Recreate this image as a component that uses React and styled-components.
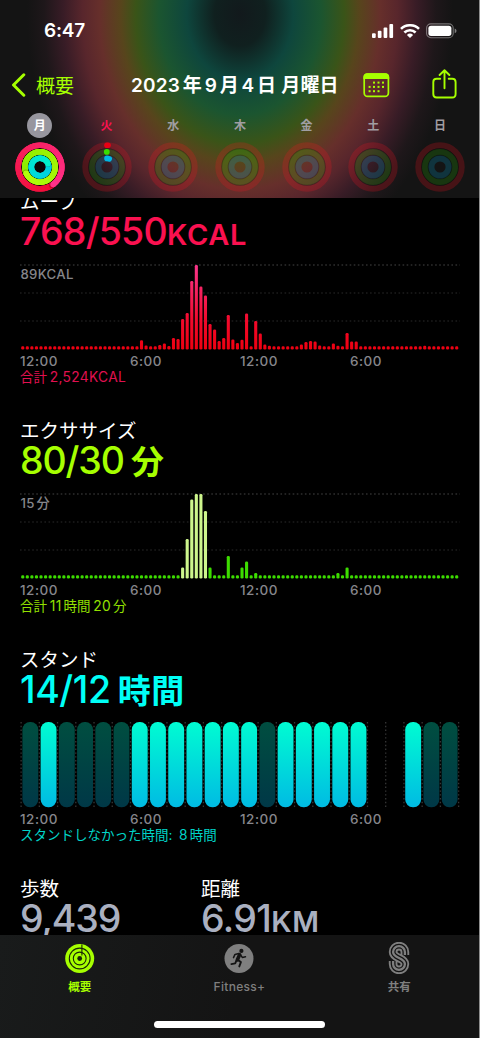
import styled, { createGlobalStyle } from 'styled-components'

const GlobalStyle = createGlobalStyle`
  * {
    box-sizing: border-box;
  }

  body {
    margin: 0;
    background: #8e8e8e;
    font-family: Inter, 'Noto Sans CJK JP', sans-serif;
    overflow: hidden;
  }
`

const Phone = styled.div`
  display: flex;
  flex-direction: column;
  width: 479px;
  height: 1038px;
  background: #000;
  color: #fff;
  overflow: hidden;
`

const Header = styled.header`
  flex: none;
  height: 198px;
  background: radial-gradient(
      ellipse 213px 266px at 240px 14px,
      #12191c 0%,
      #10201f 12%,
      #0e463d 25%,
      #1b5530 38%,
      #3a5418 49%,
      #57451c 56%,
      #662f2b 66%,
      #58262c 74%,
      #381c26 83%,
      #1e171a 92%,
      #141414 100%
    )
    #141414;
`

const StatusBar = styled.div`
  display: flex;
  justify-content: space-between;
  align-items: center;
  height: 61px;
  padding: 0 22px 0 44px;
`

const Clock = styled.div`
  font-size: 19px;
  font-weight: 600;
  letter-spacing: -0.2px;
`

const StatusIcons = styled.div`
  display: flex;
  align-items: center;
  gap: 6px;
`

const NavBar = styled.nav`
  display: flex;
  align-items: center;
  height: 48px;
  padding: 0 22px 0 11px;
`

const Back = styled.div`
  display: flex;
  align-items: center;
  gap: 10px;
  width: 120px;
  color: #a6ff00;
`

const BackLabel = styled.span`
  padding-bottom: 2px;
  font-size: 19px;
`

const Title = styled.div`
  flex: 1;
  padding-bottom: 3px;
  font-size: 19px;
  font-weight: 600;
  letter-spacing: 0.2px;
  white-space: nowrap;
`

const NavActions = styled.div`
  display: flex;
  align-items: center;
  gap: 42px;
`

const Week = styled.div`
  display: grid;
  grid-template-columns: repeat(7, 66.7px);
  padding: 4px 0 0 6.5px;
`

const Day = styled.div`
  display: flex;
  flex-direction: column;
  align-items: center;
  gap: 4px;
`

const DayName = styled.div`
  width: 25px;
  height: 25px;
  border-radius: 50%;
  font-size: 12px;
  font-weight: 700;
  line-height: 26px;
  text-align: center;
  background: ${(props) => (props.$selected ? '#97969e' : 'transparent')};
  color: ${(props) => props.$color || '#a09ea2'};
`

const Scroller = styled.main`
  flex: 1;
  min-height: 0;
  padding: 0 20px;
  overflow: hidden;
`

const Sections = styled.div`
  margin-top: -10px;
`

const Section = styled.section`
  height: 229px;
`

const Heading = styled.h2`
  height: 26px;
  margin: 0;
  font-size: 19.5px;
  font-weight: 400;
  line-height: 28px;
`

const Value = styled.div`
  height: 36px;
  margin-bottom: 14px;
  font-size: 37.5px;
  font-weight: 500;
  line-height: 36px;
  letter-spacing: ${(props) => props.$spacing || '-0.8px'};
  white-space: nowrap;
  color: ${(props) => props.$color};
`

const Unit = styled.span`
  font-size: 29px;
  font-weight: 600;
  letter-spacing: 0.7px;
`

const KanjiUnit = styled.span`
  margin-left: 7px;
  font-size: 33px;
  font-weight: 700;
  letter-spacing: 0.5px;
`

const Num = styled.span`
  margin: 0 ${(props) => (props.$last ? '0' : '0.14em')} 0
    ${(props) => (props.$first ? '0' : '0.14em')};
`

const ChartBox = styled.div`
  position: relative;
  height: 86px;
`

const Peak = styled.div`
  position: absolute;
  top: 2px;
  left: 0.5px;
  font-size: 13.2px;
  font-weight: 500;
  line-height: 16px;
  letter-spacing: 0.3px;
  color: #86868b;
`

const Axis = styled.div`
  display: grid;
  grid-template-columns: 110px 110px 110px 109px;
  margin-top: 3px;
  font-size: 13.5px;
  font-weight: 500;
  line-height: 16px;
  letter-spacing: 0.5px;
  color: #86868b;
`

const Total = styled.div`
  font-size: 13.5px;
  line-height: 17px;
  color: ${(props) => props.$color};

  ${Num} {
    font-size: 13.8px;
    letter-spacing: 0.3px;
    margin-left: 0.2em;
  }
`

const Stats = styled.div`
  display: grid;
  grid-template-columns: 181px 1fr;
`

const TabBar = styled.footer`
  flex: none;
  display: flex;
  flex-direction: column;
  align-items: center;
  justify-content: space-between;
  height: 103px;
  padding: 7px 0 10px;
  background: linear-gradient(100deg, #191b1b, #141414 50%);
`

const Tabs = styled.div`
  display: grid;
  grid-template-columns: repeat(3, 1fr);
  width: 100%;
`

const Tab = styled.div`
  display: flex;
  flex-direction: column;
  align-items: center;
  gap: 5px;
  font-size: ${(props) => props.$size || '11.5px'};
  font-weight: ${(props) => props.$weight || 700};
  line-height: 16px;
  letter-spacing: ${(props) => props.$spacing || '0'};
  color: ${(props) => (props.$active ? '#a6ff00' : '#7f7f7f')};
`

const HomeIndicator = styled.div`
  width: 171px;
  height: 7px;
  border-radius: 4px;
  background: #fff;
`

// wraps digit runs so they get the thin gaps iOS puts next to kanji
const Spaced = ({ text }) => {
  const parts = text.split(/([\dA-Z/,]+)/).filter(Boolean)
  return parts.map((part, i) =>
    /\d/.test(part) ? (
      <Num key={i} $first={i === 0} $last={i === parts.length - 1}>
        {part}
      </Num>
    ) : (
      part
    )
  )
}

const polar = (c, r, deg) => {
  const a = ((deg - 90) * Math.PI) / 180
  return [c + r * Math.cos(a), c + r * Math.sin(a)]
}

const mix = (a, b, t) => `rgb(${a.map((v, i) => Math.round(v + (b[i] - v) * t)).join(',')})`

// ring drawn as short strokes so the colour can change along the sweep
const Sweep = ({ r, end, from, to }) => {
  const step = 12
  const arcs = []
  for (let d = end - 360; d < end; d += step) {
    const [x1, y1] = polar(25, r, d)
    const [x2, y2] = polar(25, r, Math.min(d + step * 2, end))
    arcs.push(
      <path
        key={d}
        d={`M${x1} ${y1}A${r} ${r} 0 0 1 ${x2} ${y2}`}
        stroke={mix(from, to, (d - end + 360) / 360)}
      />
    )
  }
  const [cx, cy] = polar(25, r, end)
  const [sx, sy] = polar(25, r, end + 4)
  return (
    <g fill='none' strokeWidth='5.6'>
      <circle cx='25' cy='25' r={r} stroke={mix(from, to, 0.5)} />
      {arcs}
      <circle cx={sx} cy={sy} r='2.8' fill='#000' fillOpacity='0.2' />
      <circle cx={cx} cy={cy} r='2.8' fill={mix(from, to, 1)} />
    </g>
  )
}

const FullRings = () => (
  <svg width='50' height='50' viewBox='0 0 50 50'>
    <circle cx='25' cy='25' r='24.3' fill='#0b0507' />
    <Sweep r={21.8} end={143} from={[240, 12, 52]} to={[255, 50, 138]} />
    <Sweep r={15.2} end={246} from={[140, 235, 0]} to={[178, 255, 10]} />
    <Sweep r={8.7} end={68} from={[0, 205, 225]} to={[0, 240, 205]} />
  </svg>
)

const EmptyRings = ({ started }) => (
  <svg width='50' height='50' viewBox='0 0 50 50' fill='none' strokeWidth='6'>
    <circle cx='25' cy='25' r='21.7' stroke='#fa1122' strokeOpacity='0.22' />
    <circle cx='25' cy='25' r='18.2' stroke='#000' strokeOpacity='0.18' strokeWidth='1.2' />
    <circle cx='25' cy='25' r='15.1' stroke='#32e000' strokeOpacity='0.17' />
    <circle cx='25' cy='25' r='11.8' stroke='#000' strokeOpacity='0.18' strokeWidth='1.2' />
    <circle cx='25' cy='25' r='8.6' stroke='#00b4e6' strokeOpacity='0.2' />
    {started && (
      <g strokeLinecap='round' strokeWidth='5.6'>
        <path d='M25 3.3h1' stroke='#ea0014' />
        <path d='M24.7 9.9h.2' stroke='#39dc00' />
        <path d='M25 16.4q1 0 2.2.4' stroke='#00b7e4' />
      </g>
    )}
  </svg>
)

const days = [
  { name: '月', selected: true, color: '#fff' },
  { name: '火', today: true, color: '#fa1150' },
  { name: '水' },
  { name: '木' },
  { name: '金' },
  { name: '土' },
  { name: '日' },
]

const moveBars = {
  26: 9.3, 27: 4, 30: 4.5, 31: 6, 32: 3.5, 33: 11.5, 34: 10.5, 35: 30.5,
  36: 36.5, 37: 68.5, 38: 84.5, 39: 63, 40: 54, 41: 25.5, 42: 20, 43: 8.5,
  44: 11.5, 45: 34.5, 46: 10, 47: 6.5, 48: 9.7, 49: 36, 51: 28.5, 52: 16,
  53: 5, 54: 3.8, 61: 5, 62: 7.5, 63: 8.5, 64: 8, 65: 4, 68: 6, 69: 3.8,
  71: 16.5, 72: 8, 73: 8, 88: 3.8,
}

const exerciseBars = {
  35: 11, 36: 39.5, 37: 79, 38: 84.5, 39: 84.5, 40: 67.5, 41: 11, 45: 22.5,
  48: 11, 49: 17, 51: 5.5, 69: 5.5, 71: 11,
}

// x = stood, o = idle, space = no data
const standHours = 'oxooooxxxxxxxoxxxxx  xoo'

const QuarterChart = ({ values, fill, highlight }) => (
  <svg width='440' height='86' viewBox='0 0 440 86' style={{ display: 'block' }}>
    <defs>
      <linearGradient id='move' gradientUnits='userSpaceOnUse' x1='0' y1='86' x2='0' y2='0'>
        <stop offset='0' stopColor='#ee0010' />
        <stop offset='0.35' stopColor='#f20a2c' />
        <stop offset='1' stopColor='#f9368c' />
      </linearGradient>
    </defs>
    {[1, 29, 57].map((y) => (
      <line
        key={y}
        x1='0'
        x2='440'
        y1={y}
        y2={y}
        stroke={y === 1 ? '#454545' : '#2a2a2a'}
        strokeWidth='1.2'
        strokeDasharray='1.6 2.47'
      />
    ))}
    {Array.from({ length: 96 }, (_, i) => {
      const h = values[i] || 3.2
      return (
        <rect
          key={i}
          x={1.2 + i * 4.568}
          y={85.5 - h}
          width='3.1'
          height={h}
          rx='1.3'
          fill={highlight && i >= 35 && i <= 40 ? highlight : fill}
        />
      )
    })}
  </svg>
)

const StandChart = () => (
  <svg width='440' height='86' viewBox='0 0 440 86' style={{ display: 'block' }}>
    <defs>
      <linearGradient id='stood' x1='0' y1='0' x2='0' y2='1'>
        <stop offset='0' stopColor='#00fcd2' />
        <stop offset='1' stopColor='#00bbe3' />
      </linearGradient>
      <linearGradient id='idle' x1='0' y1='0' x2='0' y2='1'>
        <stop offset='0' stopColor='#004e40' />
        <stop offset='1' stopColor='#003847' />
      </linearGradient>
    </defs>
    {Array.from({ length: 25 }, (_, i) => (
      <line
        key={i}
        x1={1.1 + i * 18.23}
        x2={1.1 + i * 18.23}
        y1='0'
        y2='85'
        stroke='#363636'
        strokeWidth='1.3'
        strokeDasharray='1.4 2.4'
      />
    ))}
    {standHours.split('').map(
      (hour, i) =>
        hour !== ' ' && (
          <rect
            key={i}
            x={2.4 + i * 18.23}
            y='0'
            width='15.9'
            height='85.2'
            rx='7.6'
            fill={hour === 'x' ? 'url(#stood)' : 'url(#idle)'}
          />
        )
    )}
  </svg>
)

const HourAxis = () => (
  <Axis>
    <span>12:00</span>
    <span>6:00</span>
    <span>12:00</span>
    <span>6:00</span>
  </Axis>
)

const SignalIcon = () => (
  <svg width='22' height='14' viewBox='0 0 22 14' fill='#fff'>
    <rect x='0' y='9.3' width='3.7' height='4.7' rx='1' />
    <rect x='5.8' y='6.8' width='3.7' height='7.2' rx='1' />
    <rect x='11.6' y='3.5' width='3.7' height='10.5' rx='1' />
    <rect x='17.4' y='0' width='3.7' height='14' rx='1' />
  </svg>
)

const WifiIcon = () => (
  <svg width='20' height='14' viewBox='0 0 20 14' fill='none' stroke='#fff' strokeWidth='2.6'>
    <path d='M1 4.9a13 13 0 0 1 18 0' />
    <path d='M4.4 8.5a8 8 0 0 1 11.2 0' />
    <path d='M10 14 6.9 10.9a4.5 4.5 0 0 1 6.2 0z' fill='#fff' stroke='none' />
  </svg>
)

const BatteryIcon = () => (
  <svg width='31' height='16' viewBox='0 0 31 16'>
    <rect x='0.6' y='0.9' width='26.6' height='13.8' rx='4.3' fill='none' stroke='#fff' strokeOpacity='0.4' strokeWidth='1.1' />
    <rect x='2.4' y='2.7' width='23' height='10.2' rx='2.6' fill='#fff' />
    <path d='M28.7 5.4c2.4.8 2.4 4 0 4.8z' fill='#fff' fillOpacity='0.45' />
  </svg>
)

const CalendarIcon = () => (
  <svg width='27' height='26' viewBox='0 0 27 26'>
    <rect x='1.2' y='2' width='24.2' height='22.4' rx='3.4' fill='none' stroke='#a6ff00' strokeWidth='1.7' />
    <path d='M.4 7V5Q.4 1.2 4.2 1.2h18.2q3.8 0 3.8 3.8V7z' fill='#a6ff00' />
    {[
      [10, 10.4], [14.5, 10.4], [19, 10.4],
      [5.6, 14.7], [10, 14.7], [14.5, 14.7], [19, 14.7],
      [5.6, 19], [10, 19], [14.5, 19],
    ].map(([x, y]) => (
      <rect key={`${x}-${y}`} x={x} y={y - 0.8} width='2' height='2' fill='#a6ff00' />
    ))}
  </svg>
)

const ShareIcon = () => (
  <svg width='25' height='32' viewBox='0 0 25 32' fill='none' stroke='#a6ff00' strokeWidth='1.9' strokeLinecap='round' strokeLinejoin='round'>
    <path d='M8.2 9.7H4.6Q1.3 9.7 1.3 13v12q0 3.5 3.3 3.5h15.6q3.4 0 3.4-3.5V13q0-3.3-3.4-3.3h-3.5' />
    <path d='M12.5 19.2V1.3M7.6 6l4.9-4.8L17.4 6' />
  </svg>
)

const SummaryIcon = () => (
  <svg width='30' height='32' viewBox='0 0 30 32' fill='none'>
    <circle cx='14.7' cy='16.5' r='14.5' fill='#a6ff00' />
    <g stroke='#1a2408' strokeWidth='1.1'>
      <circle cx='14.7' cy='16.5' r='10.4' />
      <circle cx='14.7' cy='16.5' r='6.4' />
      <path d='M16.9 2.5v11' />
    </g>
    <circle cx='14.7' cy='16.5' r='2.4' fill='#1a2408' />
  </svg>
)

const FitnessIcon = () => (
  <svg width='30' height='32' viewBox='0 0 30 32' fill='none'>
    <circle cx='15' cy='16.5' r='14.5' fill='#7f7f7f' />
    <circle cx='17.4' cy='8.9' r='2.1' fill='#141414' />
    <g stroke='#141414' strokeLinecap='round' strokeLinejoin='round'>
      <path d='m15.6 12.6-2.2 5.2' strokeWidth='3.6' />
      <path d='M14.8 11.6 11 12.4l-1.5 3.2M16.4 12.6l1.9 2.8 3.2-.6' strokeWidth='1.5' />
      <path d='m13.6 17.8 3.3 2.3-1.6 4.3M12.6 18.2l-1.4 3.2-3.8.7' strokeWidth='1.9' />
    </g>
  </svg>
)

const sharePath = 'M16.9 13V10A5.9 5.9 0 0 0 5.1 10C5.1 16.6 16.9 15.4 16.9 22A5.9 5.9 0 0 1 5.1 22V19'

const SharingIcon = () => (
  <svg width='22' height='32' viewBox='0 0 22 32' fill='none'>
    <path d={sharePath} stroke='#7f7f7f' strokeWidth='8.6' />
    <path d={sharePath} stroke='#141414' strokeWidth='4.9' />
    <path d={sharePath} stroke='#7f7f7f' strokeWidth='2.3' />
  </svg>
)

const App = () => (
  <>
    <GlobalStyle />
    <Phone>
      <Header>
        <StatusBar>
          <Clock>6:47</Clock>
          <StatusIcons>
            <SignalIcon />
            <WifiIcon />
            <BatteryIcon />
          </StatusIcons>
        </StatusBar>
        <NavBar>
          <Back>
            <svg width='15' height='24' viewBox='0 0 15 24' fill='none' stroke='#a6ff00' strokeWidth='3' strokeLinecap='round' strokeLinejoin='round'>
              <path d='M12.8 1.8 2.5 12l10.3 10.2' />
            </svg>
            <BackLabel>概要</BackLabel>
          </Back>
          <Title>
            <Spaced text='2023年9月4日 月曜日' />
          </Title>
          <NavActions>
            <CalendarIcon />
            <ShareIcon />
          </NavActions>
        </NavBar>
        <Week>
          {days.map((day) => (
            <Day key={day.name}>
              <DayName $selected={day.selected} $color={day.color}>
                {day.name}
              </DayName>
              {day.selected ? <FullRings /> : <EmptyRings started={day.today} />}
            </Day>
          ))}
        </Week>
      </Header>
      <Scroller>
        <Sections>
          <Section>
            <Heading>ムーブ</Heading>
            <Value $color='#fa1150'>
              768/550<Unit>KCAL</Unit>
            </Value>
            <ChartBox>
              <QuarterChart values={moveBars} fill='url(#move)' />
              <Peak>89KCAL</Peak>
            </ChartBox>
            <HourAxis />
            <Total $color='#e01050'>
              <Spaced text='合計2,524KCAL' />
            </Total>
          </Section>
          <Section>
            <Heading>エクササイズ</Heading>
            <Value $color='#a6ff00' $spacing='-1.1px'>
              80/30<KanjiUnit>分</KanjiUnit>
            </Value>
            <ChartBox>
              <QuarterChart values={exerciseBars} fill='#3ddc00' highlight='#cdf58c' />
              <Peak>
                <Spaced text='15分' />
              </Peak>
            </ChartBox>
            <HourAxis />
            <Total $color='#93e000'>
              <Spaced text='合計11時間20分' />
            </Total>
          </Section>
          <Section>
            <Heading>スタンド</Heading>
            <Value $color='#00fff6' $spacing='-0.4px'>
              14/12<KanjiUnit>時間</KanjiUnit>
            </Value>
            <ChartBox>
              <StandChart />
            </ChartBox>
            <HourAxis />
            <Total $color='#00d4c8'>
              <Spaced text='スタンドしなかった時間: 8時間' />
            </Total>
          </Section>
          <Stats>
            <div>
              <Heading>歩数</Heading>
              <Value $color='#aab0c0' $spacing='-1.1px'>
                9,439
              </Value>
            </div>
            <div>
              <Heading>距離</Heading>
              <Value $color='#aab0c0' $spacing='-0.6px'>
                6.91<Unit>KM</Unit>
              </Value>
            </div>
          </Stats>
        </Sections>
      </Scroller>
      <TabBar>
        <Tabs>
          <Tab $active>
            <SummaryIcon />
            概要
          </Tab>
          <Tab $size='12px' $weight='500' $spacing='0.3px'>
            <FitnessIcon />
            Fitness+
          </Tab>
          <Tab>
            <SharingIcon />
            共有
          </Tab>
        </Tabs>
        <HomeIndicator />
      </TabBar>
    </Phone>
  </>
)

export default App
